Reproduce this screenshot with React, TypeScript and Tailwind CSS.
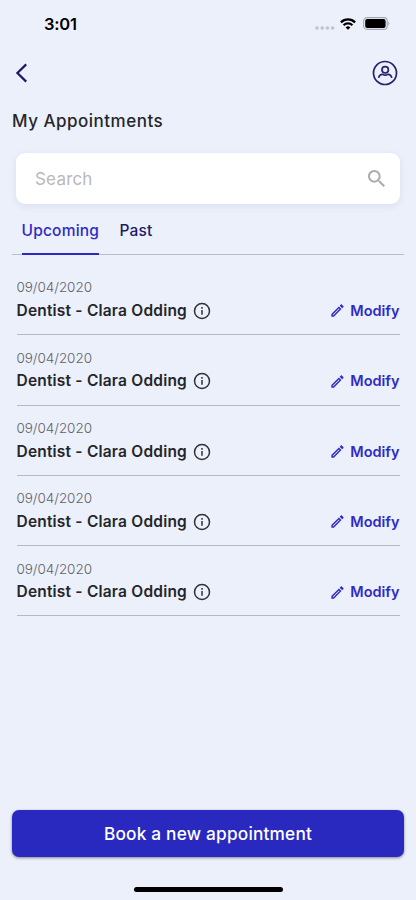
import React from "react";

const appointments = [1, 2, 3, 4, 5].map((id) => ({
  id,
  date: "09/04/2020",
  title: "Dentist - Clara Odding",
}));

function StatusBar() {
  return (
    <div className="flex h-[47px] items-center pl-[44px] pr-[26px]">
      <span className="text-[16.5px] font-semibold leading-5 tracking-[-0.2px] text-black">3:01</span>
      <div className="ml-auto flex items-center">
        <svg width="20" height="4" viewBox="0 0 20 4" className="mt-[8px]" fill="#bfc3cf">
          <circle cx="2" cy="2" r="1.8" />
          <circle cx="7.2" cy="2" r="1.8" />
          <circle cx="12.4" cy="2" r="1.8" />
          <circle cx="17.6" cy="2" r="1.8" />
        </svg>
        <svg width="16" height="12" viewBox="0 0 16 12" className="ml-[5px]" fill="none" stroke="#000" strokeWidth="2.3">
          <path d="M0.9 4.3a10.2 10.2 0 0 1 14.2 0" />
          <path d="M3.6 7.2a6.3 6.3 0 0 1 8.8 0" />
          <path d="M8 11.8L5.6 9.4a3.5 3.5 0 0 1 4.8 0z" fill="#000" stroke="none" />
        </svg>
        <svg width="27" height="13" viewBox="0 0 27 13" className="ml-[7px]">
          <rect x="0.6" y="0.6" width="23.6" height="11.8" rx="3.4" fill="none" stroke="#a5a8b0" strokeWidth="1.1" />
          <rect x="2.2" y="2.1" width="20.4" height="8.8" rx="1.9" fill="#000" />
          <path d="M25.3 4.6c1.5.6 1.5 3.2 0 3.8z" fill="#a5a8b0" />
        </svg>
      </div>
    </div>
  );
}

function Header() {
  return (
    <div className="flex h-[51px] items-center justify-between pl-[15px] pr-[18px]">
      <button aria-label="Back">
        <svg width="14" height="20" viewBox="0 0 14 20" fill="none" stroke="#1d176b" strokeWidth="2.2">
          <path d="M11.2 1.4L2.4 10l8.8 8.6" />
        </svg>
      </button>
      <button aria-label="Profile">
        <svg width="26" height="26" viewBox="0 0 26 26" fill="none" stroke="#29216f" strokeWidth="1.7">
          <circle cx="13" cy="13" r="11.5" />
          <circle cx="13.2" cy="9.8" r="3.2" />
          <path d="M6.6 17.8c.5-2.5 2.5-3.7 4.4-3.3 1.5.9 2.9.9 4.4 0 1.9-.4 3.9.8 4.4 3.3" />
        </svg>
      </button>
    </div>
  );
}

export default function App() {
  return (
    <div className="flex h-[900px] w-full flex-col bg-[#ecf0fa] font-['Inter',sans-serif]">
      <StatusBar />
      <Header />
      <h1 className="mt-[11px] pl-[12px] text-[17px] font-medium leading-6 tracking-[0.5px] text-[#25262a]">My Appointments</h1>

      <div className="ml-[15.5px] mr-[16px] mt-[20px] flex h-[51px] items-center justify-between rounded-[9px] bg-white pl-[19.5px] pr-[15px] shadow-[0_2px_7px_rgba(90,110,190,0.13)]">
        <span className="text-[17px] leading-6 tracking-[0.2px] text-[#b9b9b9]">Search</span>
        <svg width="17" height="17" viewBox="3 3 17.5 17.5" fill="#acacac">
          <path d="M15.5 14h-.79l-.28-.27C15.41 12.59 16 11.11 16 9.5 16 5.91 13.09 3 9.5 3S3 5.91 3 9.5 5.91 16 9.5 16c1.61 0 3.09-.59 4.23-1.57l.27.28v.79l5 4.99L20.49 19l-4.99-5zm-6 0C7.01 14 5 11.99 5 9.5S7.01 5 9.5 5 14 7.01 14 9.5 11.99 14 9.5 14z" />
        </svg>
      </div>

      <div className="mx-[12px] flex h-[51px] border-b border-[#b9bdca] pl-[9.5px] text-[15.5px] font-medium leading-5">
        <div className="-mb-px h-[51px] border-b-2 border-[#2c29c0] pt-[17px] tracking-[0.2px] text-[#2f2bc4]">Upcoming</div>
        <div className="ml-[20.5px] pt-[17px] tracking-[0.1px] text-[#221a66]">Past</div>
      </div>

      <div className="mx-[16.5px] mt-[10px]">
        {appointments.map((item) => (
          <div key={item.id} className="flex h-[70.3px] items-end justify-between border-b border-[#b5b9c6] pb-[11.4px]">
            <div>
              <div className="text-[13.5px] font-light leading-5 tracking-[-0.05px] text-[#606268]">{item.date}</div>
              <div className="mt-[1.5px] flex items-center">
                <span className="text-[15.5px] font-semibold leading-6 tracking-[0.2px] text-[#25262a]">{item.title}</span>
                <svg width="18" height="18" viewBox="0 0 18 18" className="ml-[6px]" fill="none" stroke="#303136" strokeWidth="1.5">
                  <circle cx="9" cy="9" r="7.5" />
                  <path d="M9 8v4.8M9 5.1v1.6" />
                </svg>
              </div>
            </div>
            <button className="flex items-center text-[#2f2bc4]">
              <svg width="13" height="13" viewBox="2.5 2.5 19 19" fill="currentColor">
                <path d="M14.06 9.02l.92.92L5.92 19H5v-.92l9.06-9.06M17.66 3c-.25 0-.51.1-.7.29l-1.83 1.83 3.75 3.75 1.83-1.83c.39-.39.39-1.02 0-1.41l-2.34-2.34c-.2-.2-.45-.29-.71-.29zm-3.6 3.19L3 17.25V21h3.75L17.81 9.94l-3.75-3.75z" />
              </svg>
              <span className="ml-[6px] text-[14.5px] font-semibold leading-6">Modify</span>
            </button>
          </div>
        ))}
      </div>

      <div className="mt-auto px-[12px]">
        <button className="h-[47px] w-full rounded-[7px] bg-[#2a29bf] text-[17.25px] font-medium leading-6 tracking-[0.2px] text-white shadow-[0_1px_3px_rgba(0,0,0,0.45)]">
          Book a new appointment
        </button>
      </div>
      <div className="mx-auto mb-[8px] mt-[30px] h-[5px] w-[149px] rounded-full bg-black" />
    </div>
  );
}
